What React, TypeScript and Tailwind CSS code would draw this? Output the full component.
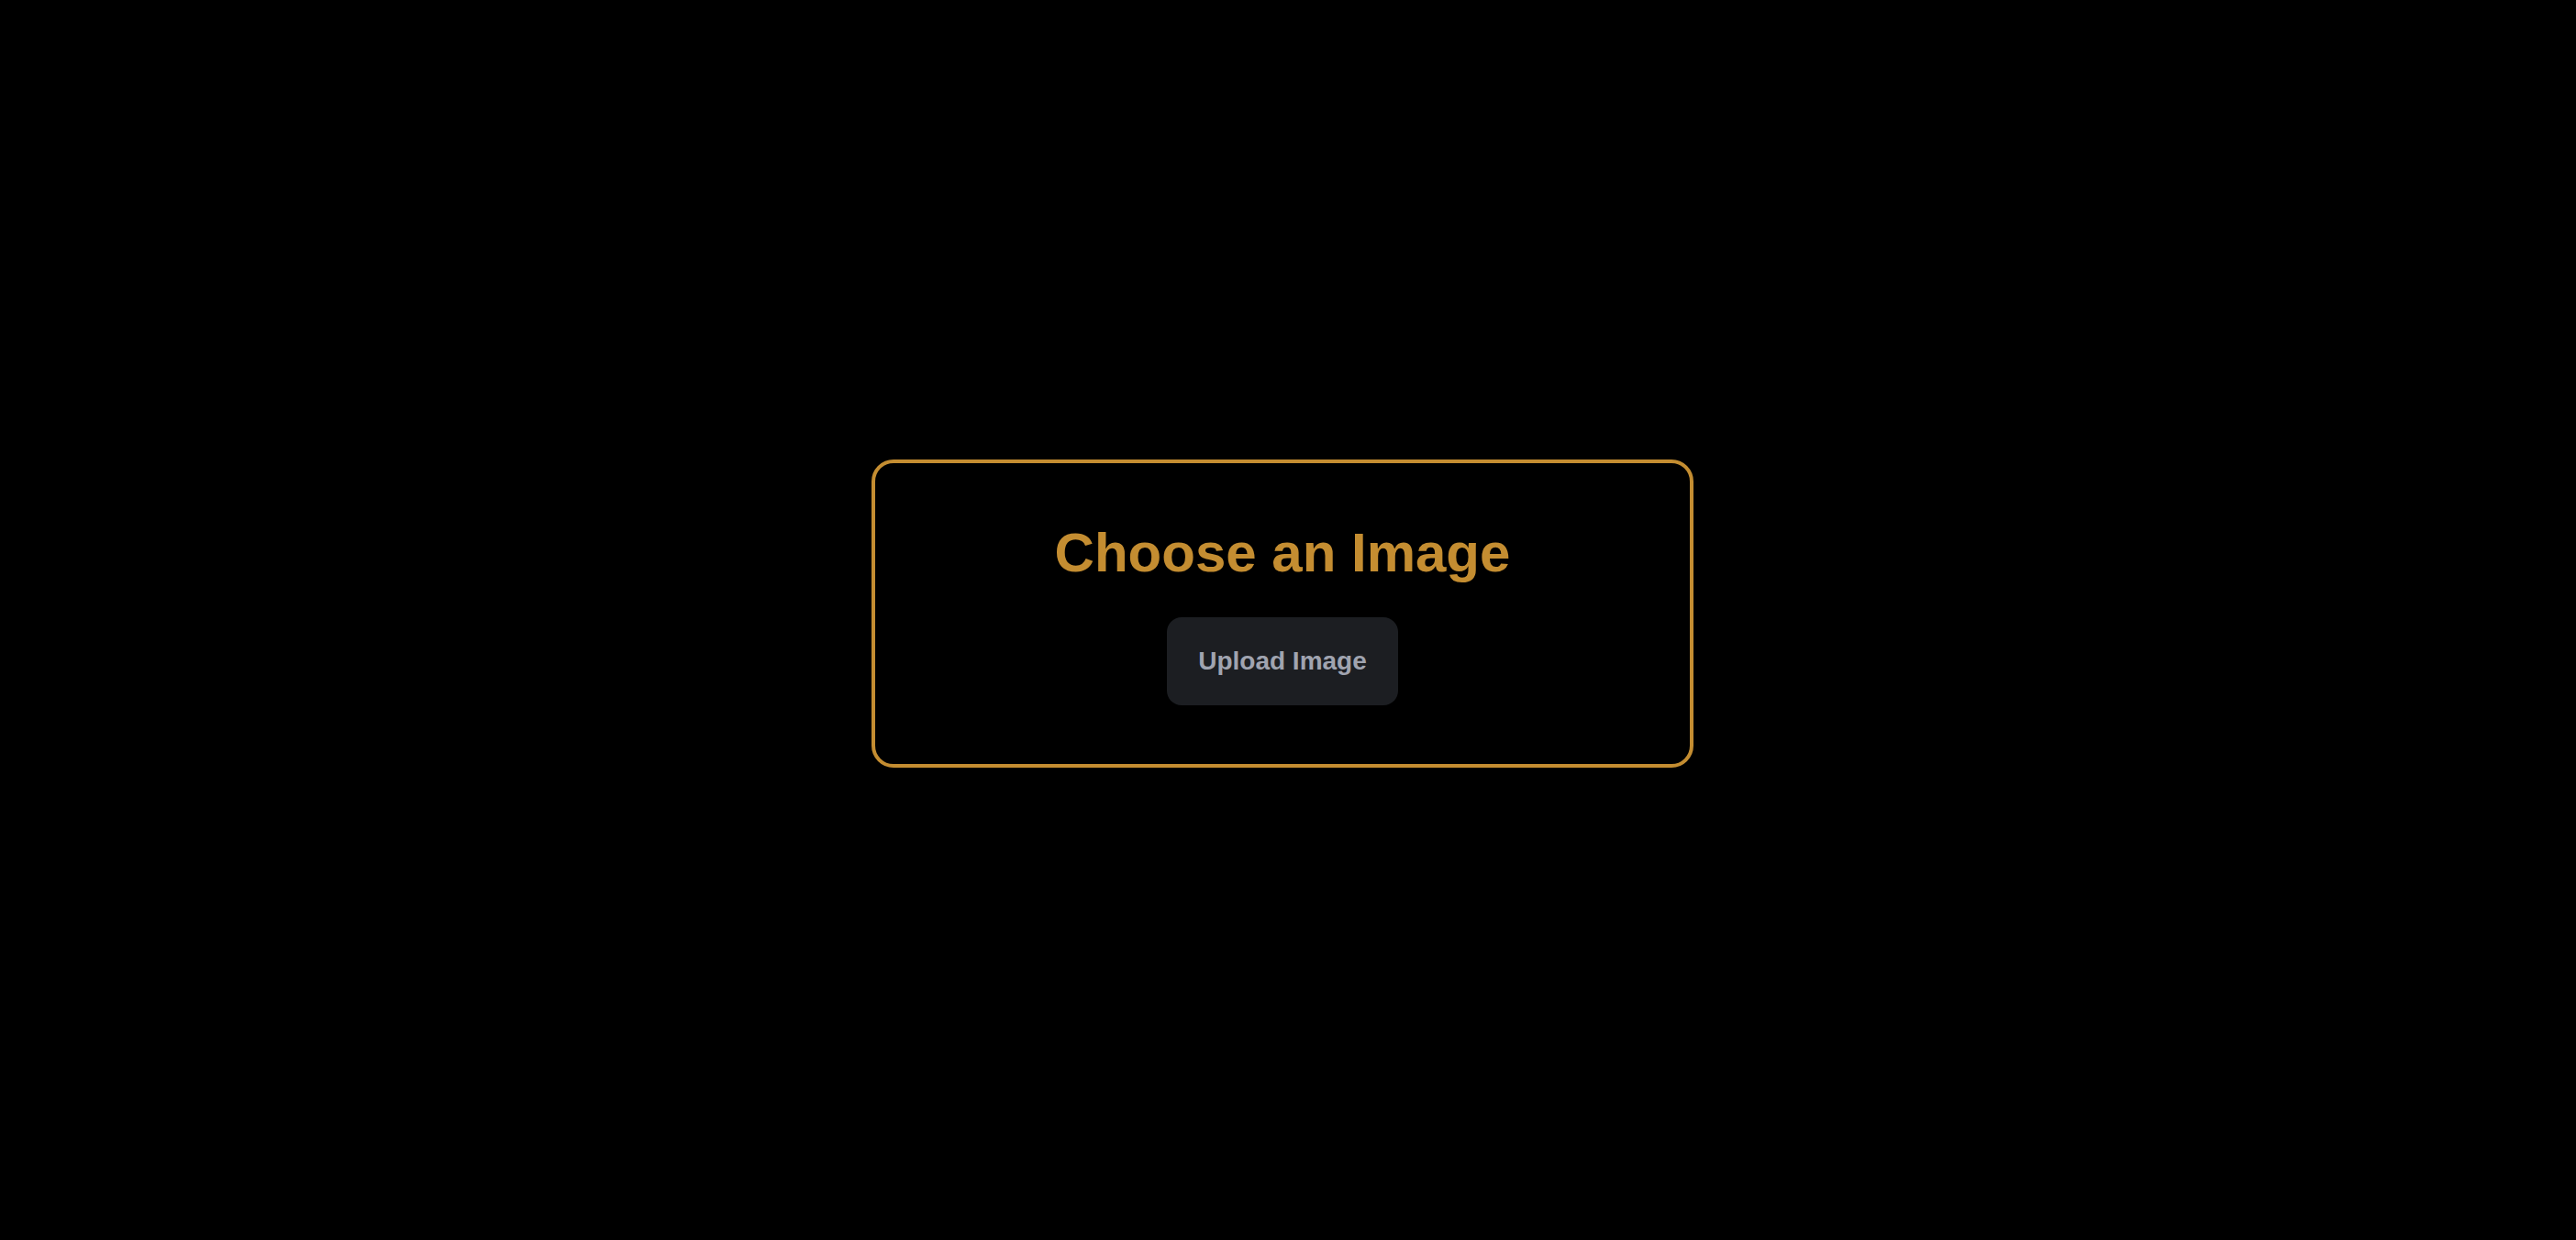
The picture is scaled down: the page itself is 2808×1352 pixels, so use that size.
import React from 'react';

export default function App() {
  const handleUpload = () => {
    // no-op in the static mock
  };

  return (
    <div className="min-h-screen w-full bg-black flex items-center justify-center pr-3 pb-[14px] font-['Liberation_Sans',Arial,sans-serif]">
      <div className="w-full max-w-4xl border-4 border-[#c48d31] rounded-3xl bg-black pt-[68px] pb-16 flex flex-col items-center">
        <h1 className="text-6xl leading-none font-bold text-[#c48d31] mb-10">Choose an Image</h1>
        <button
          onClick={handleUpload}
          className="bg-[#1c1e22] text-[#a0a4b0] text-[28px] leading-9 font-bold px-[34px] py-[30px] rounded-2xl"
        >
          Upload Image
        </button>
      </div>
    </div>
  );
}
